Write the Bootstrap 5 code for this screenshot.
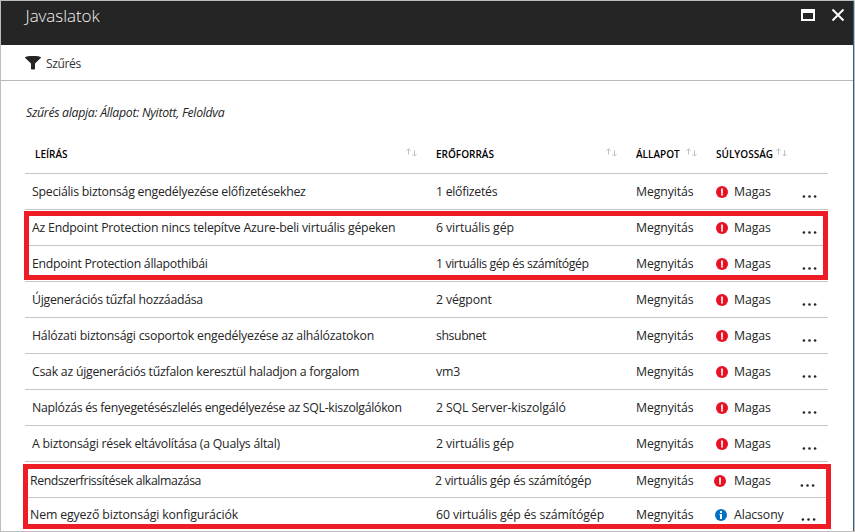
<!DOCTYPE html>
<html lang="hu">
<head>
<meta charset="utf-8">
<meta name="viewport" content="width=device-width, initial-scale=1">
<title>Javaslatok</title>
<link href="https://cdn.jsdelivr.net/npm/bootstrap@5.3.0/dist/css/bootstrap.min.css" rel="stylesheet">
<style>
body{font-family:"Open Sans","Noto Sans",sans-serif;font-size:12.3px;line-height:18px;color:#252525;letter-spacing:-.12px}
.blade{height:532px;border:1px solid #bdbdbd}
.blade-inner{border-right:1px solid #2f5d7c}
.blade-head{height:44px;background:#252525;color:#f2f2f2;padding:4px 7px 0 24.500px}
.blade-title{font-size:17px;line-height:22px;font-weight:300;letter-spacing:-.05px}
.tools{height:36px;border-bottom:1px solid #b8b8b8;padding:1px 24px 0}
.tools span{font-size:12px;letter-spacing:-.35px;margin:2px 0 0 5px;color:#333}
.note{font-style:italic;padding:23px 25px 0;height:53px;letter-spacing:-.3px}
.grid-list{margin-left:24px;width:803px}
.line{display:grid;grid-template-columns:404px 200px 80px 85.500px 1fr;height:36px;border-bottom:1px solid #c6c6c6;padding:1px 0 0 7px;align-items:center;white-space:nowrap}
.line>span:first-child{letter-spacing:-.25px}
.line>.snug,.line>span.snug:first-child{letter-spacing:-.41px}
.line>.semi{letter-spacing:-.29px}
.line>span.long:first-child{letter-spacing:-.22px}
.line>span.dense:first-child{letter-spacing:-.29px}
.line>span.airy:first-child{letter-spacing:-.13px}
.line.heads{height:40px;font-size:10px;font-weight:600;color:#000;padding-top:0;letter-spacing:0}
.heads svg{width:11px;height:9px;stroke:#c3c3c3;fill:none;margin-top:-3px}
.heads .wide{padding-right:19px}
.heads .first{margin-left:3px}
.heads .state{margin-right:6px}
.heads .rank{margin-right:3px}
.sev{width:12px;height:12px;margin-right:6px;margin-top:-1px}
.dots{width:15px;height:3px;margin-top:8px}
.ring{position:absolute;border:5px solid #ee1c25;left:23px;top:210px;width:804px;height:69px}
.ring.low{left:22px;top:463px;width:808px;height:65px}
.nudge{padding-left:5px;padding-top:3px;grid-template-columns:405px 201px 78px 85.500px 1fr}
.nudge .sevtext{margin-left:2px}
.final{border:0;height:33px;padding-top:1px;grid-template-columns:406px 200px 79px 85.500px 1fr}
.final .sevtext{margin-left:1px}
</style>
<script src="https://cdn.jsdelivr.net/npm/bootstrap@5.3.0/dist/js/bootstrap.bundle.min.js"></script>
</head>
<body class="overflow-hidden">
<svg class="d-none">
<symbol id="sort" viewBox="0 0 11 9"><path d="M2.5 6.5V.8M.3 2.9 2.5.7l2.2 2.2M8.500 2v6M6.300 5.900l2.200 2.200 2.200-2.200"/></symbol>
<symbol id="high" viewBox="0 0 12 12"><circle cx="6" cy="6" r="6" fill="#e81123"/><path d="M5 2.500h2v7H5z" fill="#fff" fill-opacity=".85"/><path d="M5 7h2v.5H5z" fill="#e81123" fill-opacity=".5"/></symbol>
<symbol id="info" viewBox="0 0 12 12"><circle cx="6" cy="6" r="6" fill="#0072c6"/><path d="M5 2h2v2H5zM4.500 5H7v5H5V6h-.5z" fill="#fff"/></symbol>
<symbol id="more" viewBox="0 0 15 3"><g fill="#252525"><circle cx="1.900" cy="1.500" r="1.300"/><circle cx="7.500" cy="1.500" r="1.300"/><circle cx="13.100" cy="1.500" r="1.300"/></g></symbol>
</svg>
<main class="blade position-relative bg-white">
<div class="blade-inner h-100">
<header class="blade-head d-flex justify-content-between align-items-start">
<h1 class="blade-title m-0">Javaslatok</h1>
<div class="d-flex">
<svg width="52" height="22" viewBox="0 0 52 22"><path d="M7 4h14v12H7zM9 8v6h10V8z" fill="#fff" fill-rule="evenodd"/><path d="m38.500 4.500 11 11m0-11-11 11" stroke="#fff" stroke-width="1.900"/></svg>
</div>
</header>
<div class="tools d-flex align-items-center">
<svg width="16" height="14" viewBox="0 0 16 14"><path d="M0 1.200C1 .3 4 0 8 0s7 .3 8 1.200v.5L10 7.500V13q-1 1-4 .3V7.500L0 1.700z" fill="#252525"/></svg><span>Szűrés</span>
</div>
<div class="note">Szűrés alapja: Állapot: Nyitott, Feloldva</div>
<section class="grid-list">
<div class="line heads">
<div class="wide d-flex justify-content-between align-items-center"><span class="first">LEÍRÁS</span><svg><use href="#sort"/></svg></div>
<div class="wide d-flex justify-content-between align-items-center"><span>ERŐFORRÁS</span><svg><use href="#sort"/></svg></div>
<div class="d-flex align-items-center"><span class="state">ÁLLAPOT</span><svg><use href="#sort"/></svg></div>
<div class="d-flex align-items-center"><span class="rank">SÚLYOSSÁG</span><svg><use href="#sort"/></svg></div>
</div>
<div class="line"><span>Speciális biztonság engedélyezése előfizetésekhez</span><span class="semi">1 előfizetés</span><span>Megnyitás</span><span class="d-flex align-items-center"><svg class="sev"><use href="#high"/></svg><span class="sevtext">Magas</span></span><svg class="dots"><use href="#more"/></svg></div>
<div class="line"><span class="long">Az Endpoint Protection nincs telepítve Azure-beli virtuális gépeken</span><span>6 virtuális gép</span><span>Megnyitás</span><span class="d-flex align-items-center"><svg class="sev"><use href="#high"/></svg><span class="sevtext">Magas</span></span><svg class="dots"><use href="#more"/></svg></div>
<div class="line"><span class="dense">Endpoint Protection állapothibái</span><span class="snug">1 virtuális gép és számítógép</span><span>Megnyitás</span><span class="d-flex align-items-center"><svg class="sev"><use href="#high"/></svg><span class="sevtext">Magas</span></span><svg class="dots"><use href="#more"/></svg></div>
<div class="line"><span class="dense">Újgenerációs tűzfal hozzáadása</span><span>2 végpont</span><span>Megnyitás</span><span class="d-flex align-items-center"><svg class="sev"><use href="#high"/></svg><span class="sevtext">Magas</span></span><svg class="dots"><use href="#more"/></svg></div>
<div class="line"><span class="long">Hálózati biztonsági csoportok engedélyezése az alhálózatokon</span><span class="snug">shsubnet</span><span>Megnyitás</span><span class="d-flex align-items-center"><svg class="sev"><use href="#high"/></svg><span class="sevtext">Magas</span></span><svg class="dots"><use href="#more"/></svg></div>
<div class="line"><span>Csak az újgenerációs tűzfalon keresztül haladjon a forgalom</span><span>vm3</span><span>Megnyitás</span><span class="d-flex align-items-center"><svg class="sev"><use href="#high"/></svg><span class="sevtext">Magas</span></span><svg class="dots"><use href="#more"/></svg></div>
<div class="line"><span class="dense">Naplózás és fenyegetésészlelés engedélyezése az SQL-kiszolgálókon</span><span>2 SQL Server-kiszolgáló</span><span>Megnyitás</span><span class="d-flex align-items-center"><svg class="sev"><use href="#high"/></svg><span class="sevtext">Magas</span></span><svg class="dots"><use href="#more"/></svg></div>
<div class="line"><span class="long">A biztonsági rések eltávolítása (a Qualys által)</span><span>2 virtuális gép</span><span>Megnyitás</span><span class="d-flex align-items-center"><svg class="sev"><use href="#high"/></svg><span class="sevtext">Magas</span></span><svg class="dots"><use href="#more"/></svg></div>
<div class="line nudge"><span class="snug">Rendszerfrissítések alkalmazása</span><span class="semi">2 virtuális gép és számítógép</span><span>Megnyitás</span><span class="d-flex align-items-center"><svg class="sev"><use href="#high"/></svg><span class="sevtext">Magas</span></span><svg class="dots"><use href="#more"/></svg></div>
<div class="line nudge final"><span class="airy">Nem egyező biztonsági konfigurációk</span><span>60 virtuális gép és számítógép</span><span>Megnyitás</span><span class="d-flex align-items-center"><svg class="sev"><use href="#info"/></svg><span class="sevtext">Alacsony</span></span><svg class="dots"><use href="#more"/></svg></div>
</section>
</div>
<div class="ring"></div>
<div class="ring low"></div>
</main>
</body>
</html>
